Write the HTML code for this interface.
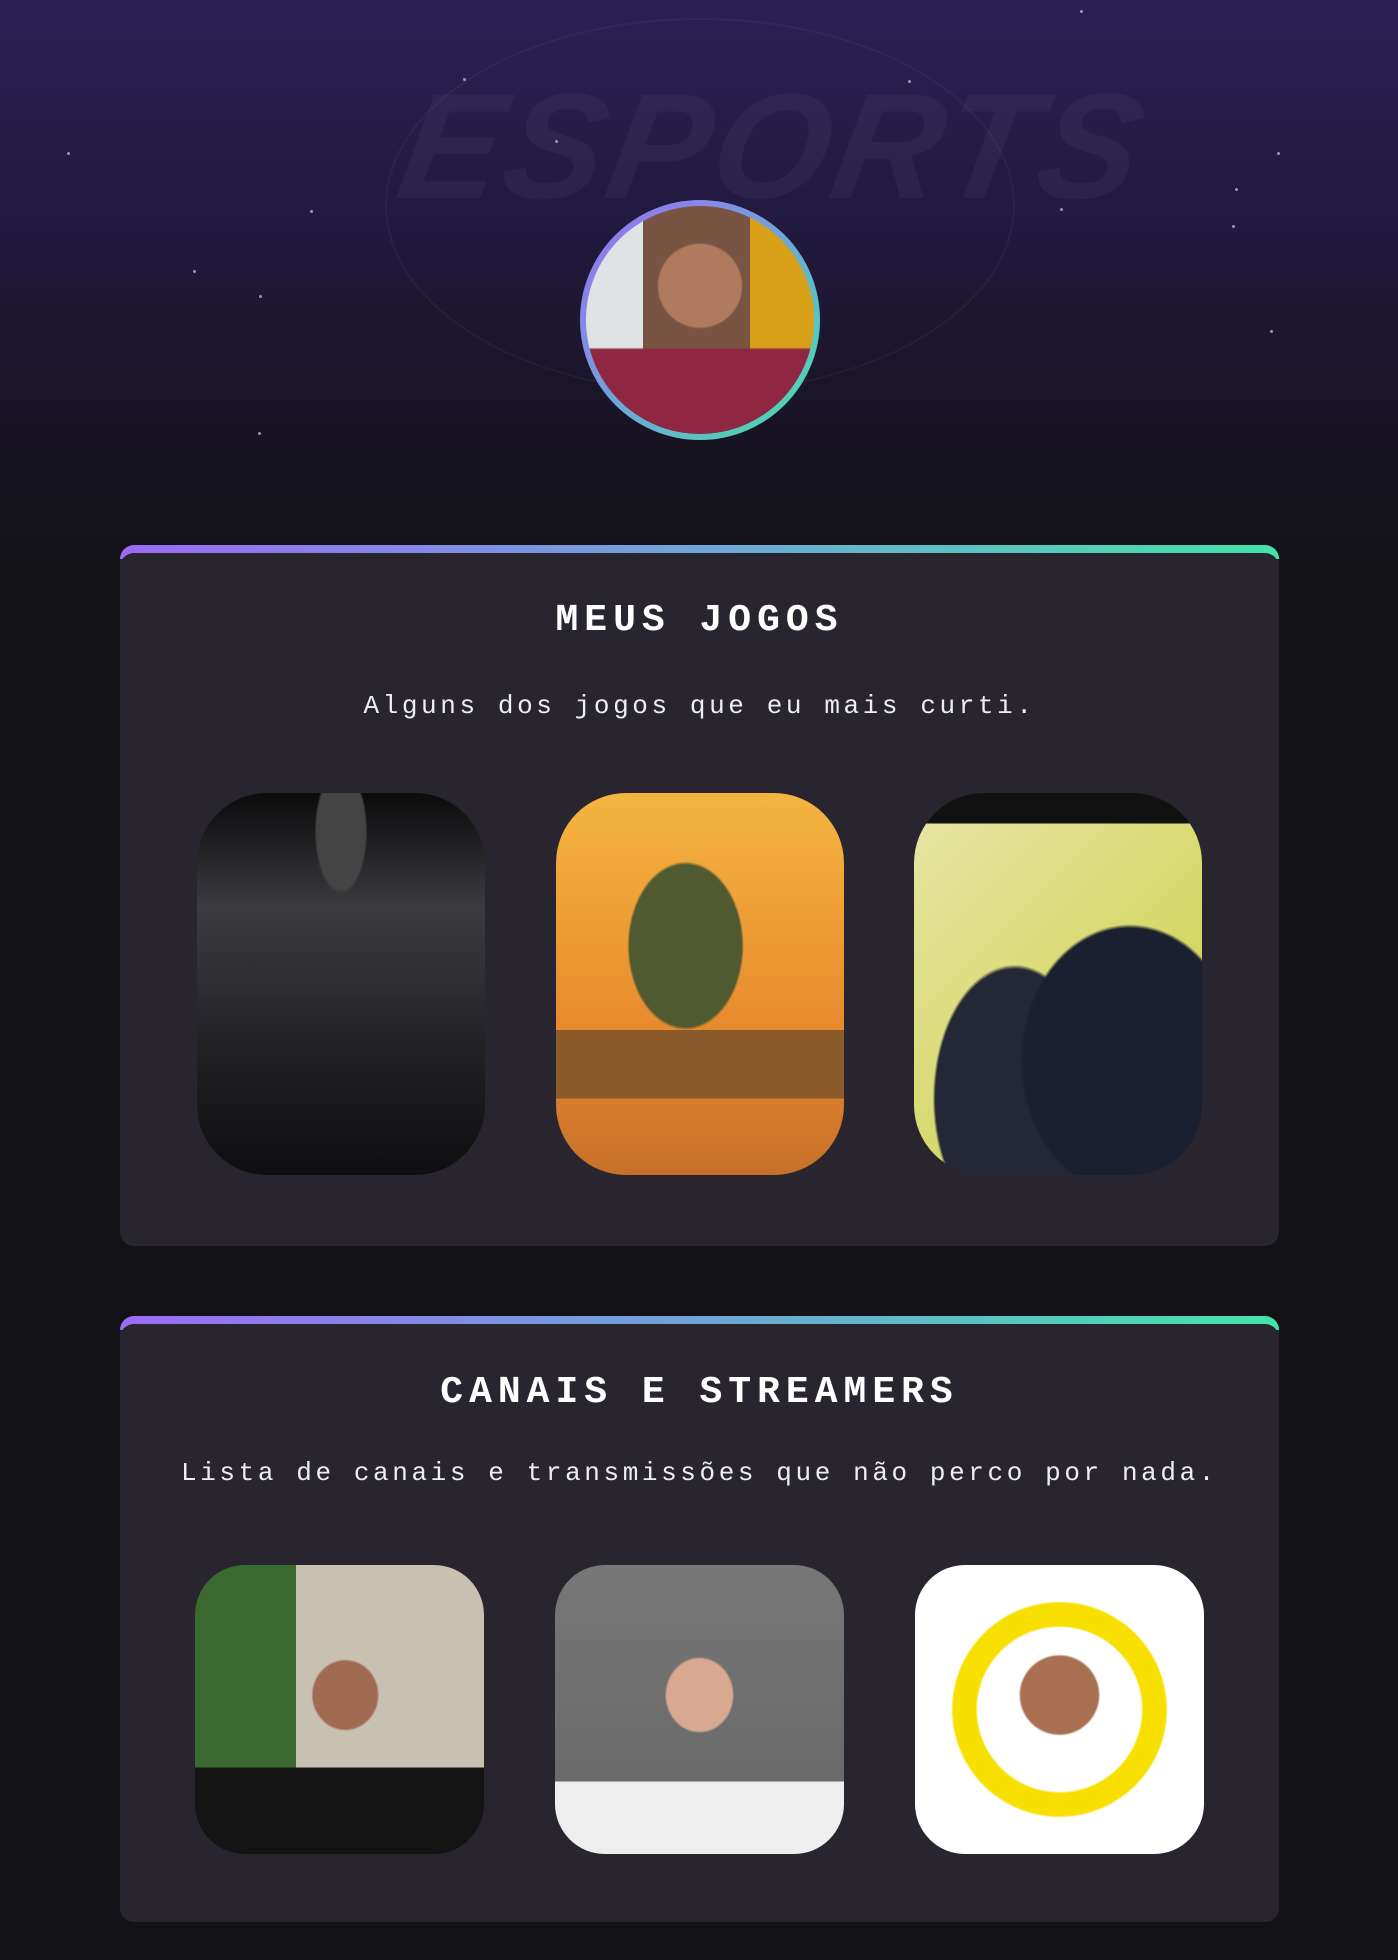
<!DOCTYPE html>
<html><head><meta charset="utf-8"><style>
*{margin:0;padding:0;box-sizing:border-box}
body{width:1398px;height:1960px;overflow:hidden;background:#131217;font-family:"Liberation Mono",monospace;color:#fff;position:relative}
.hero{position:absolute;left:0;top:0;width:1398px;height:560px;background:linear-gradient(180deg,#2c1f55 0%,#231a42 35%,#1a1528 70%,#131217 100%)}
.logo{position:absolute;left:400px;top:60px;width:600px;height:200px;text-align:center;font:italic bold 150px "Liberation Sans",sans-serif;color:rgba(255,255,255,0.04);letter-spacing:4px;transform:skewX(-10deg)}
.ring{position:absolute;left:385px;top:18px;width:630px;height:375px;border:2px solid rgba(255,255,255,0.04);border-radius:50%}
.star{position:absolute;width:3px;height:3px;border-radius:50%;background:#cfc8e8;opacity:.7}
.avatar{position:absolute;left:580px;top:200px;width:240px;height:240px;border-radius:50%;background:linear-gradient(135deg,#9b6bf5,#6fa5d8,#44e3a8);padding:6px}
.avatar div{width:100%;height:100%;border-radius:50%;background:radial-gradient(circle at 50% 35%,#b07a5e 0 22%,transparent 23%),linear-gradient(180deg,transparent 62%,#8f2742 63%),linear-gradient(90deg,#dfe3e6 0 25%,#7a5443 25% 72%,#d8a018 72%)}
.card{position:absolute;left:120px;width:1159px;background:#29252f;border-radius:14px;border-top:8px solid transparent;text-align:center}
.card::before{content:"";position:absolute;left:0;right:0;top:-8px;height:14px;border-radius:14px 14px 0 0;background:linear-gradient(90deg,#9b6bf5,#6fa5d8 50%,#44e3a8);z-index:0}
.card::after{content:"";position:absolute;left:0;right:0;top:0;height:14px;border-radius:14px 14px 0 0;background:#29252f}
h2{position:absolute;left:0;right:0;font-size:38px;font-weight:bold;letter-spacing:6px}
p{position:absolute;left:0;right:0;font-size:26px;letter-spacing:3.6px;color:#eee}
.img{position:absolute}
</style></head><body>
<div class="hero">
<div class="ring"></div>
<div class="logo">ESPORTS</div>
<div class="star" style="left:463px;top:78px"></div><div class="star" style="left:908px;top:80px"></div>
<div class="star" style="left:1235px;top:188px"></div><div class="star" style="left:1277px;top:152px"></div>
<div class="star" style="left:310px;top:210px"></div><div class="star" style="left:555px;top:140px"></div>
<div class="star" style="left:1232px;top:225px"></div><div class="star" style="left:67px;top:152px"></div>
<div class="star" style="left:259px;top:295px"></div><div class="star" style="left:1060px;top:208px"></div>
<div class="star" style="left:1080px;top:10px"></div><div class="star" style="left:258px;top:432px"></div>
<div class="star" style="left:193px;top:270px"></div><div class="star" style="left:1270px;top:330px"></div>
</div>
<div class="avatar"><div></div></div>

<div class="card" style="top:545px;height:701px">
<h2 style="top:46px">MEUS JOGOS</h2>
<p style="top:138px">Alguns dos jogos que eu mais curti.</p>
<div class="img" style="left:77px;top:240px;width:288px;height:382px;border-radius:70px;background:radial-gradient(ellipse at 50% 10%,#444 0 12%,transparent 13%),linear-gradient(180deg,#0b0b0c 0%,#3b3b40 30%,#26262a 60%,#0e0e10 100%)"></div>
<div class="img" style="left:436px;top:240px;width:288px;height:382px;border-radius:70px;background:linear-gradient(180deg,transparent 62%,#8a5a2a 62% 80%,transparent 80%),radial-gradient(ellipse at 45% 40%,#4f5a30 0 25%,transparent 26%),linear-gradient(180deg,#f4b540,#e88b2e 60%,#c7702a)"></div>
<div class="img" style="left:794px;top:240px;width:288px;height:382px;border-radius:70px;background:linear-gradient(180deg,#111 0 8%,transparent 8%),radial-gradient(ellipse at 75% 70%,#1b2030 0 35%,transparent 36%),radial-gradient(ellipse at 35% 80%,#242836 0 30%,transparent 31%),linear-gradient(135deg,#e8e6a8,#c9d040)"></div>
</div>

<div class="card" style="top:1316px;height:606px">
<h2 style="top:47px">CANAIS E STREAMERS</h2>
<p style="top:134px">Lista de canais e transmissões que não perco por nada.</p>
<div class="img" style="left:75px;top:241px;width:289px;height:289px;border-radius:50px;background:radial-gradient(ellipse at 52% 45%,#a06b50 0 15%,transparent 16%),linear-gradient(180deg,transparent 70%,#141414 70%),linear-gradient(90deg,#3a6a30 0 35%,#c8c0b0 35%)"></div>
<div class="img" style="left:435px;top:241px;width:289px;height:289px;border-radius:50px;background:radial-gradient(ellipse at 50% 45%,#d8a890 0 16%,transparent 17%),linear-gradient(180deg,transparent 75%,#eee 75%),linear-gradient(180deg,#777,#666)"></div>
<div class="img" style="left:795px;top:241px;width:289px;height:289px;border-radius:50px;background:radial-gradient(circle at 50% 45%,#a87050 0 18%,transparent 19%),radial-gradient(circle at 50% 50%,#fff 0 40%,#f7e000 41% 52%,#fff 53%)"></div>
</div>
</body></html>
